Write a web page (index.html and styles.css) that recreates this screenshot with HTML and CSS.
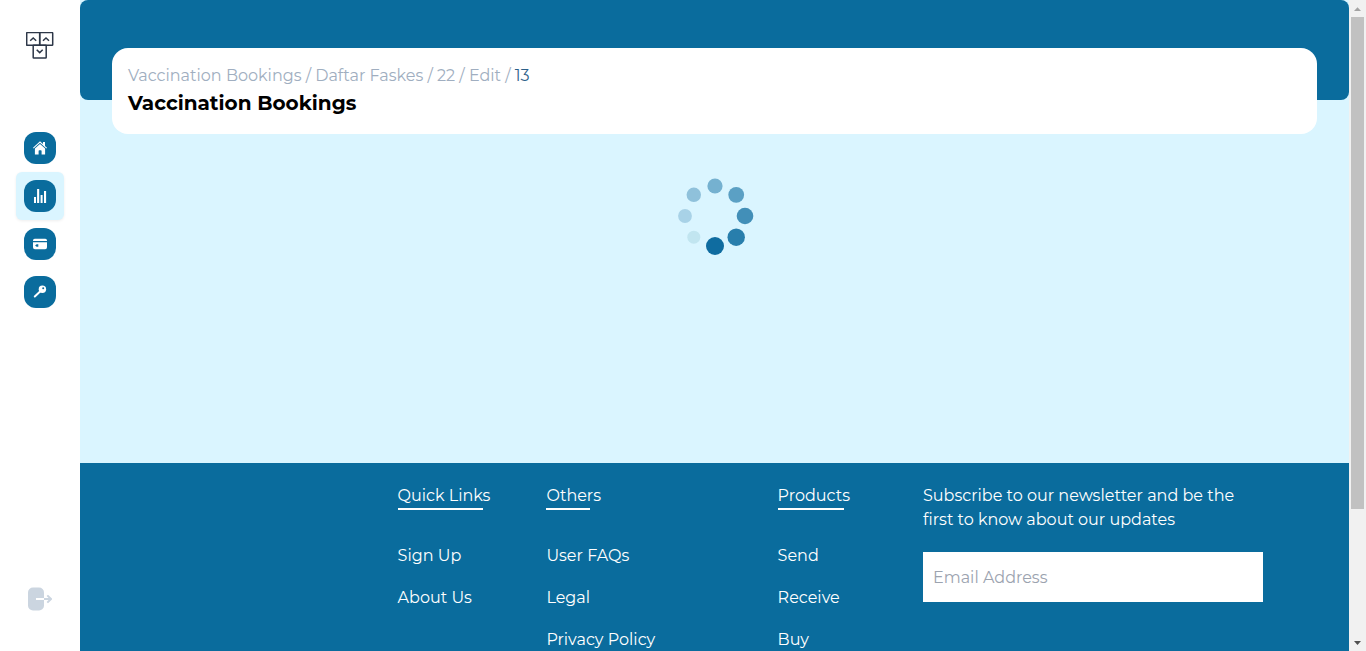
FILE: index.html
```html
<!DOCTYPE html>
<html lang="en">
<head>
<meta charset="utf-8">
<title>Vaccination Bookings</title>
<link rel="stylesheet" href="styles.css">
</head>
<body>
<div class="app">
  <aside class="sidebar">
    <svg class="logo" width="28" height="28" viewBox="0 0 28 28" fill="none" stroke="#2d3748" stroke-width="1.5">
      <rect x="0.7" y="0.6" width="13" height="12.700" rx=".6"/><rect x="13.700" y="0.6" width="13" height="12.700" rx=".6"/><rect x="7.200" y="13.300" width="13" height="12.700" rx=".6"/>
      <path d="M4.200 8.700 7.200 6 10.200 8.700M17 8.700 20 6 23 8.700M10.700 17.800l3 2.800 3-2.800"/>
    </svg>
    <nav class="nav">
      <a class="nav-item"><span class="tile"><svg width="16" height="16" viewBox="0 0 16 16" fill="#fff"><path d="M1 7.8 8 1.3l3 2.8V1.9h2v4L15 7.8l-.7.7L8 2.8 1.7 8.500Z"/><path d="M2.900 8.500 8 3.900l5.100 4.600v6H9.600v-3.600q0-.7-.7-.7H7.300q-.7 0-.7.7v3.600H2.900Z"/></svg></span></a>
      <a class="nav-item active"><span class="tile"><svg width="16" height="16" viewBox="0 0 16 16" fill="#fff"><rect x="2" y="9" width="2" height="6"/><rect x="5.100" y="1" width="2.100" height="14"/><rect x="8.600" y="7" width="2" height="8"/><rect x="12" y="3" width="2.100" height="12"/></svg></span></a>
      <a class="nav-item"><span class="tile"><svg width="16" height="16" viewBox="0 0 16 16"><path fill="#fff" d="M1 5V4.500Q1 2.800 2.700 2.800h10.600Q15 2.800 15 4.500V5ZM1 6.300h14v5q0 1.900-1.900 1.900H2.900Q1 13.200 1 11.300Z"/><path fill="#0a6c9d" d="M3.100 9.400 4.600 8.200H6.300V10.700H4.600Z"/></svg></span></a>
      <a class="nav-item"><span class="tile"><svg width="16" height="16" viewBox="0 0 16 16"><circle cx="10.400" cy="5.200" r="3.700" fill="#fff"/><path d="M8.600 7 2.800 12.500" stroke="#fff" stroke-width="2" stroke-linecap="round"/><circle cx="11.200" cy="4.300" r="1" fill="#0a6c9d"/></svg></span></a>
    </nav>
    <svg class="logout" width="24" height="24" viewBox="0 0 24 24" fill="none">
      <rect x="0" y="0.500" width="16" height="23" rx="5" fill="#cbd5e0"/>
      <path d="M8 12h8" stroke="#fff" stroke-width="2"/><path d="M16 12h7M19.300 8.400 23 12l-3.700 3.600" stroke="#cbd5e0" stroke-width="2"/>
    </svg>
  </aside>
  <main class="main">
    <header class="hero">
      <div class="card">
        <div class="crumbs">Vaccination Bookings / Daftar Faskes / 22 / Edit / <span class="current">13</span></div>
        <h1 class="title">Vaccination Bookings</h1>
      </div>
    </header>
    <section class="content">
      <svg class="spinner" width="78" height="80" viewBox="0 0 78 80">
        <circle cx="38" cy="10" r="7.600" fill="#75b1d0"/><circle cx="59.200" cy="18.800" r="7.900" fill="#5ba0c4"/><circle cx="68" cy="40" r="8.300" fill="#428fb8"/><circle cx="59.200" cy="61.200" r="8.700" fill="#287eac"/><circle cx="38" cy="70" r="9" fill="#0f6ca0"/><circle cx="16.800" cy="61.200" r="6.500" fill="#c1e5f0"/><circle cx="8" cy="40" r="6.900" fill="#a8d2e7"/><circle cx="16.800" cy="18.800" r="7.200" fill="#8fc1db"/>
      </svg>
    </section>
    <footer class="footer">
      <section class="col quick"><h2 class="head">Quick Links</h2><a class="link">Sign Up</a><a class="link">About Us</a></section>
      <section class="col others"><h2 class="head">Others</h2><a class="link">User FAQs</a><a class="link">Legal</a><a class="link">Privacy Policy</a></section>
      <section class="col products"><h2 class="head">Products</h2><a class="link">Send</a><a class="link">Receive</a><a class="link">Buy</a></section>
      <section class="newsletter"><p class="pitch">Subscribe to our newsletter and be the<br>first to know about our updates</p><input class="email" type="text" placeholder="Email Address"></section>
    </footer>
  </main>
  <div class="scrollbar">
    <svg width="17" height="17"><path d="M5 11 8.500 7.300 12 11Z" fill="#a3a3a3"/></svg>
    <div class="thumb"></div>
    <svg class="down" width="17" height="17"><path d="M5 7h7l-3.500 4Z" fill="#505050"/></svg>
  </div>
</div>
</body>
</html>
```
FILE: styles.css
```css
* { box-sizing: border-box; margin: 0; padding: 0; }
body { font: 400 16px/24px Montserrat, Inter, sans-serif; background: #fff; overflow: hidden; }
svg { display: block; }
.app { display: flex; height: 651px; overflow: hidden; }
.sidebar { width: 80px; display: flex; flex-direction: column; align-items: center; padding: 32px 0 40px; background: #fff; }
.nav { margin-top: 64px; display: flex; flex-direction: column; }
.nav-item { width: 48px; height: 48px; display: grid; place-items: center; border-radius: 6px; }
.nav-item.active { background: #daf5ff; box-shadow: 0 1px 3px rgba(0,0,0,.07); }
.tile { width: 32px; height: 32px; display: grid; place-items: center; border-radius: 12px; background: #0a6c9d; }
.logout { margin-top: auto; }
.main { width: 1269px; display: flex; flex-direction: column; background: #daf5ff; }
.hero { height: 100px; flex: none; padding: 48px 32px 0; background: #0a6c9d; border-radius: 8px; }
.card { height: 86px; padding: 16px; background: #fff; border-radius: 16px; }
.crumbs { color: #a0aec0; white-space: nowrap; }
.current { color: #2c6089; }
.title { margin-top: 1px; font-size: 20px; line-height: 28px; font-weight: 700; color: #000; }
.content { height: 363px; flex: none; display: flex; justify-content: center; padding-top: 76px; }
.spinner { margin-left: 2px; }
.footer { height: 188px; flex: none; display: flex; padding: 21px 0 0 317.600px; background: #0a6c9d; color: #fff; }
.col { display: flex; flex-direction: column; align-items: flex-start; gap: 18px; white-space: nowrap; }
.quick { width: 148.800px; }
.others { width: 231.200px; }
.products { width: 145.400px; }
.head { height: 26px; font-size: inherit; font-weight: 400; margin-bottom: 16px; border-bottom: 2px solid #fff; }
.quick .head { width: 85px; }
.others .head { width: 44px; }
.products .head { width: 66px; }
.pitch { white-space: nowrap; }
.email { display: block; width: 340px; height: 50px; margin-top: 20px; padding: 0 10px; border: 0; background: #fff; font: inherit; }
.email::placeholder { color: #9ca3af; opacity: 1; }
.scrollbar { width: 17px; display: flex; flex-direction: column; align-items: center; background: #f1f1f1; }
.thumb { width: 13px; height: 492px; background: #c1c1c1; }
.down { margin-top: auto; }
```
